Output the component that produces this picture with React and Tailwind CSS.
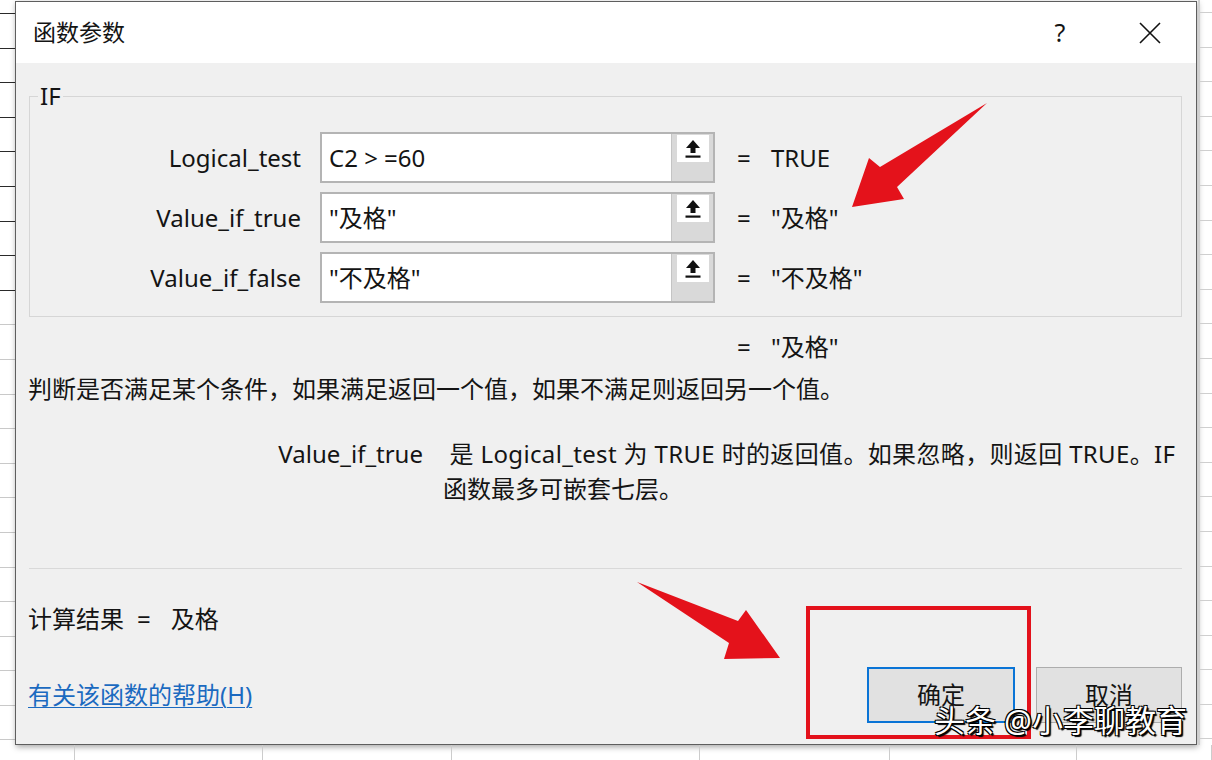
import React from 'react';

const FONT = "font-['Noto_Sans','Noto_Sans_CJK_SC',sans-serif]";

// upload / collapse icon inside the ref-edit box
const PickIcon = () => (
  <svg width="18" height="20" viewBox="0 0 18 20">
    <path d="M9 1 L16 9 L11.5 9 L11.5 14 L6.5 14 L6.5 9 L2 9 Z" fill="#111" />
    <rect x="1.5" y="16.5" width="15" height="2.2" fill="#111" />
  </svg>
);

const ArgRow = ({ label, value, result }) => (
  <div className="flex items-center h-[51px]">
    <div className="w-[271px] text-right">{label}</div>
    <div className="ml-[19px] w-[395px] h-[51px] flex border-2 border-[#b4b4b4] bg-white">
      <div className="flex-1 pl-[7px] flex items-center whitespace-nowrap">{value}</div>
      <div className="w-[42px] bg-[#d9d9d9] border-l border-[#c4c4c4] flex justify-center">
        <div className="mt-[1px] w-[32px] h-[27px] bg-white flex items-center justify-center">
          <PickIcon />
        </div>
      </div>
    </div>
    <div className="ml-[22px] w-[34px]">=</div>
    <div className="whitespace-nowrap">{result}</div>
  </div>
);

const App = () => {
  const leftLines = Array.from({ length: 22 });
  const rightLines = Array.from({ length: 22 });
  const bottomCells = ['w-[75px]', 'w-[188px]', 'w-[189px]', 'w-[248px]', 'w-[190px]', 'w-[187px]', 'flex-1'];

  return (
    <div className={`relative w-[1212px] h-[760px] overflow-hidden bg-white text-[#141414] text-[24px] ${FONT}`}>
      <div className="flex h-[745px]">
        {/* spreadsheet behind, left */}
        <div className="w-[15px] flex flex-col">
          <div className="h-[14px] shrink-0 border-b border-[#2a2a2a]" />
          {leftLines.map((_, i) => (
            <div
              key={i}
              className={`h-[34.6px] shrink-0 border-b ${i < 8 ? 'border-[#2a2a2a]' : 'border-[#c9c9c9]'}`}
            />
          ))}
        </div>

        {/* dialog */}
        <div className="mt-[1px] w-[1182px] h-[744px] flex flex-col border border-[#5e5e5e] bg-[#f0f0f0] shadow-[1px_2px_6px_rgba(0,0,0,0.35)]">
          <div className="h-[61px] shrink-0 bg-white flex items-center pl-[17px]">
            <div className="text-[23px]">函数参数</div>
            <div className="ml-auto w-[40px] text-center text-[25px]">?</div>
            <div className="ml-[50px] mr-[26px] w-[40px] flex justify-center">
              <svg width="22" height="22" viewBox="0 0 22 22">
                <path d="M1 1 L21 21 M21 1 L1 21" stroke="#111" strokeWidth="1.6" />
              </svg>
            </div>
          </div>

          <div className="flex-1 flex flex-col pl-[13px] pr-[14px]">
            {/* IF group */}
            <div className="mt-[33px] border border-[#d6d6d6] pb-[13px]">
              <div className="-mt-[16px] ml-[8px] px-[2px] w-fit h-[30px] leading-[30px] bg-[#f0f0f0]">IF</div>
              <div className="mt-[21px] flex flex-col gap-[9px]">
                <ArgRow label="Logical_test" value="C2 > =60" result="TRUE" />
                <ArgRow label="Value_if_true" value={'"及格"'} result={'"及格"'} />
                <ArgRow label="Value_if_false" value={'"不及格"'} result={'"不及格"'} />
              </div>
            </div>

            <div className="mt-[13px] h-[34px] flex items-center">
              <div className="ml-[708px] w-[34px]">=</div>
              <div>"及格"</div>
            </div>

            <div className="mt-[8px] h-[34px] -ml-[1px] flex items-center whitespace-nowrap">
              判断是否满足某个条件，如果满足返回一个值，如果不满足则返回另一个值。
            </div>

            <div className="mt-[30px] flex leading-[35px] whitespace-nowrap -ml-[13px]">
              <div className="w-[407px] text-right">Value_if_true</div>
              <div className="ml-[20px]">
                <div className="tracking-[0.35px]">&nbsp;是 Logical_test 为 TRUE 时的返回值。如果忽略，则返回 TRUE。IF</div>
                <div>函数最多可嵌套七层。</div>
              </div>
            </div>

            <div className="mt-[62px] h-px bg-[#d9d9d9]" />

            <div className="mt-[33px] h-[34px] -ml-[1px] flex items-center whitespace-nowrap">
              <span>计算结果</span>
              <span className="ml-[13px]">=</span>
              <span className="ml-[20px]">及格</span>
            </div>

            <div className="mt-[31px] h-[56px] flex items-center">
              <a className="-ml-[1px] text-[#1b6ac0] underline underline-offset-[3px] decoration-1 whitespace-nowrap">
                有关该函数的帮助(H)
              </a>
              <div className="ml-auto w-[148px] h-[56px] flex items-center justify-center bg-[#e1e1e1] border-2 border-[#0a74d6]">
                确定
              </div>
              <div className="ml-[21px] w-[146px] h-[56px] flex items-center justify-center bg-[#e1e1e1] border border-[#adadad]">
                取消
              </div>
            </div>
          </div>
        </div>

        {/* spreadsheet behind, right */}
        <div className="flex-1 flex flex-col border-l-2 border-[#d0d0d0] ml-[1px]">
          <div className="h-[13px] shrink-0 border-b border-[#cfcfcf]" />
          {rightLines.map((_, i) => (
            <div key={i} className="h-[34.6px] shrink-0 border-b border-[#cfcfcf]" />
          ))}
        </div>
      </div>

      {/* spreadsheet behind, bottom */}
      <div className="h-[15px] flex">
        {bottomCells.map((w, i) => (
          <div key={i} className={`${w} h-full border-r border-[#cccccc]`} />
        ))}
      </div>

      {/* annotation overlays */}
      <svg className="absolute left-0 top-0 pointer-events-none" width="1212" height="760">
        <polygon points="987,103 880,167 869,158 852,207 904,199 897,187" fill="#e4121b" />
        <polygon points="637,582 738,621 746,610 780,658 724,659 729,643" fill="#e4121b" />
      </svg>
      <div className="absolute left-[806px] top-[606px] w-[225px] h-[133px] border-[4px] border-[#e3111b]" />
      <div className="absolute left-[934px] top-[699px] text-[31px] leading-[42px] text-white whitespace-nowrap [text-shadow:1px_1px_0_#000,-1px_-1px_0_#000,1px_-1px_0_#000,-1px_1px_0_#000,2px_2px_1px_#000]">
        头条 @小李聊教育
      </div>
    </div>
  );
};

export default App;
